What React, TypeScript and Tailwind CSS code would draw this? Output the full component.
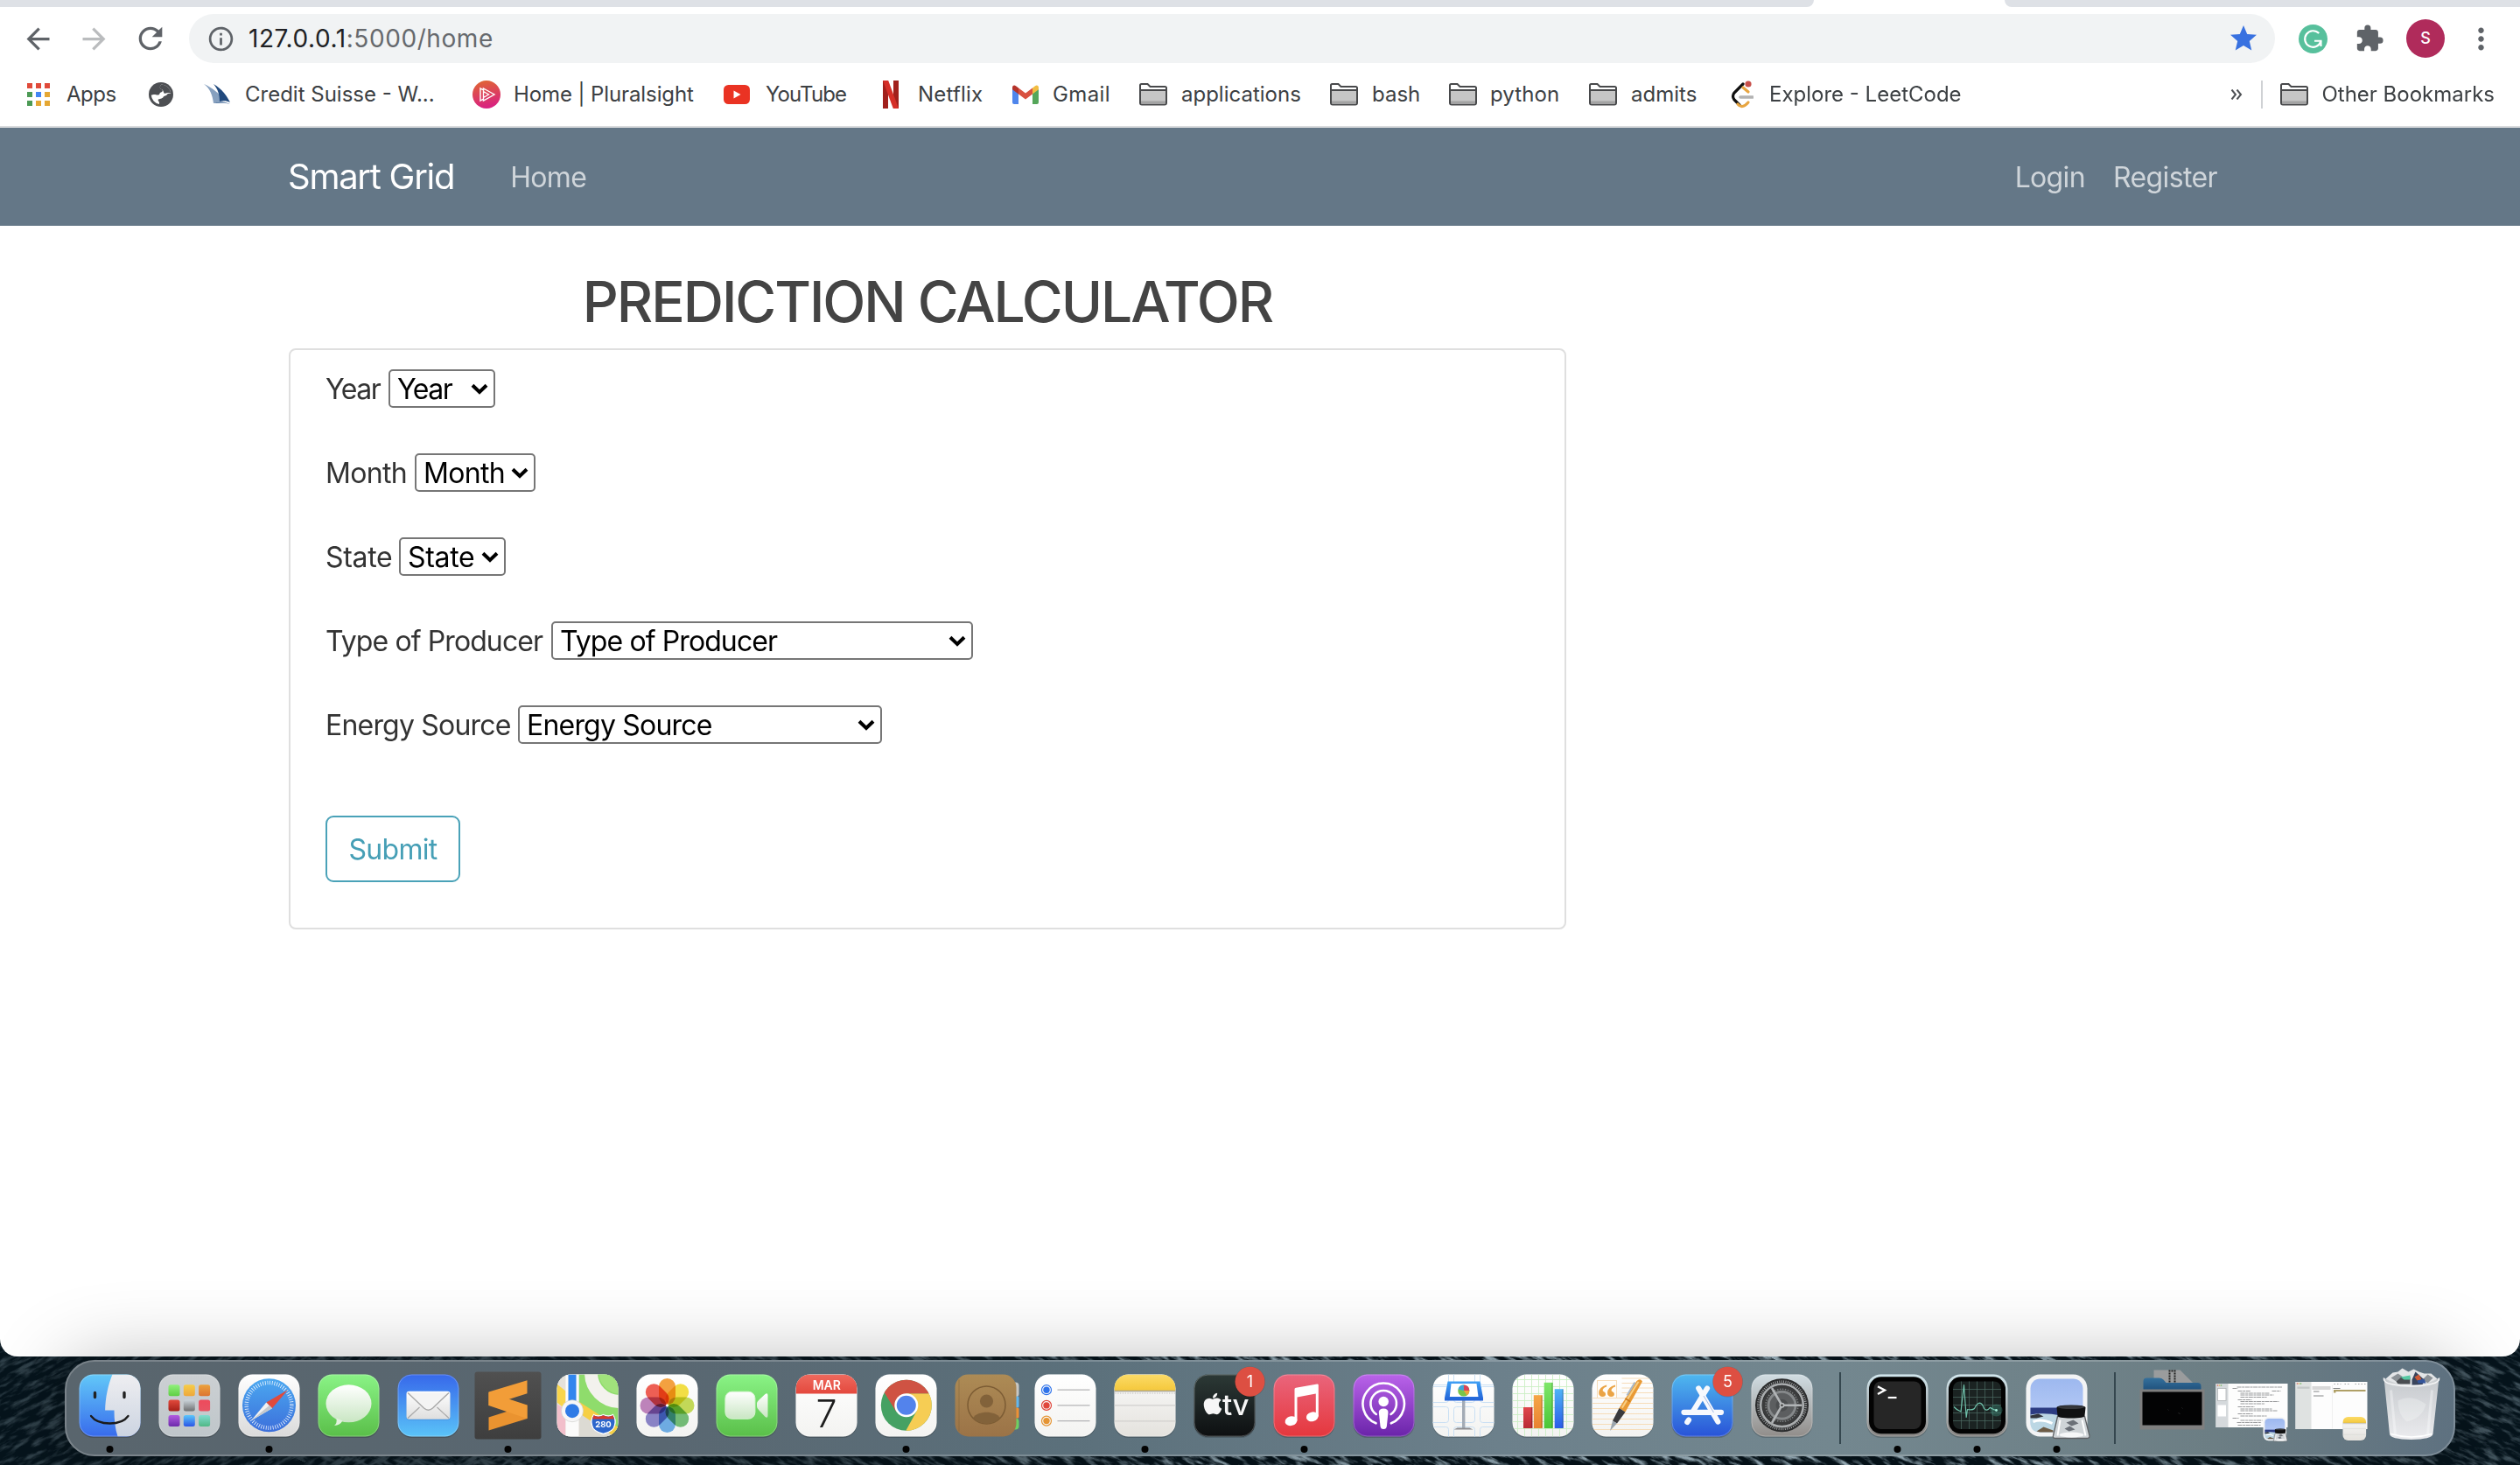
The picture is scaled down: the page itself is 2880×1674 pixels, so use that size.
import React from "react";
import {
  MdArrowBack,
  MdArrowForward,
  MdRefresh,
  MdInfoOutline,
  MdStar,
  MdExtension,
  MdMoreVert,
} from "react-icons/md";
import { FaApple } from "react-icons/fa";

/* ---------- browser toolbar ---------- */

function TabStrip() {
  return (
    <div className="flex h-2 bg-white">
      <div className="w-[2073px] rounded-br-[10px] bg-[#dee1e6]" />
      <div className="w-[218px] bg-white" />
      <div className="flex-1 rounded-bl-[10px] bg-[#dee1e6]" />
    </div>
  );
}

function Toolbar() {
  return (
    <div className="flex h-[72px] items-center bg-white pl-[24px] text-[#5f6368]">
      <MdArrowBack className="size-[39px]" />
      <MdArrowForward className="ml-[25px] size-[39px] text-[#babcbe]" />
      <MdRefresh className="ml-[25px] size-[40px]" />
      <div className="ml-6 flex h-14 w-[2384px] items-center rounded-full bg-[#f1f3f4] pr-[18px] pl-[20px]">
        <MdInfoOutline className="size-[33px]" />
        <span className="ml-[15px] text-[28px] tracking-[0.58px] text-[#202124]">
          127.0.0.1<span className="text-[#66696d]">:5000/home</span>
        </span>
        <MdStar className="ml-auto size-[36px] text-[#3871e0]" />
      </div>
      <svg viewBox="0 0 32 32" className="ml-[27px] size-[33px]">
        <circle cx="16" cy="16" r="16" fill="#57c09c" />
        <path d="M22.5 9.8A9 9 0 1 0 24.6 18.6" fill="none" stroke="#fff" strokeWidth="2.1" />
        <path d="M17.5 18.2h7.2v6" fill="none" stroke="#fff" strokeWidth="2.1" />
      </svg>
      <MdExtension className="ml-[31px] size-[34px]" />
      <div className="ml-[25px] flex size-[44px] items-center justify-center rounded-full bg-[#b02b5b] text-[18px] font-medium text-white">
        S
      </div>
      <MdMoreVert className="ml-[22px] size-[39px]" />
    </div>
  );
}

function AppsIcon() {
  const colors = ["#e04a3a", "#e04a3a", "#e04a3a", "#4c9a55", "#4285f4", "#e5a733", "#4c9a55", "#e5a733", "#e5a733"];
  return (
    <div className="grid w-[26px] grid-cols-3 gap-[4px]">
      {colors.map((c, i) => (
        <div key={i} className="size-[6px]" style={{ backgroundColor: c }} />
      ))}
    </div>
  );
}

function GlobeIcon() {
  return (
    <svg viewBox="0 0 28 28" className="w-[28px]">
      <circle cx="14" cy="14" r="14" fill="#4d4f53" />
      <path d="M14.500 2.600C12 5 12.500 7 14.500 8C17 9 15.500 11 14 11.500C12 12 13 14 11 14.500C8.500 15 8 13.500 5.500 14L2.800 14.800A11.300 11.300 0 0 0 12 25C12.500 22.500 11 22 10.500 20C12 18.500 15.500 19 16.500 17C17.500 15 20 16 21 14C22 12 24 13 25.200 12.500A11.300 11.300 0 0 0 14.500 2.600Z" fill="#fff" />
      <path d="M14.500 2.600C12 5 12.500 7 14.500 8C17 9 16.500 10.500 17.500 12.500C20 13.500 22 11 25.200 12.500A11.300 11.300 0 0 0 14.500 2.600Z" fill="#4d4f53" />
    </svg>
  );
}

function CreditSuisseIcon() {
  return (
    <svg viewBox="0 0 30 24" className="w-[30px]">
      <path d="M0 0C7 5 10 13 11 22L22 19C18 10 9 4 0 0Z" fill="#86a0bf" />
      <path d="M11 0C20 5 25 12 30 21C26 19 22 19 18 20C18 12 16 6 11 0Z" fill="#20497d" />
      <path d="M11 22C18 19 24 20 30 23C24 21 18 22 11 22Z" fill="#5f80a8" />
    </svg>
  );
}

function PluralsightIcon() {
  return (
    <svg viewBox="0 0 32 32" className="w-8">
      <defs>
        <linearGradient id="ps" x1="0" y1="0" x2="0.2" y2="1">
          <stop offset="0" stopColor="#e0692f" />
          <stop offset="1" stopColor="#d9237f" />
        </linearGradient>
      </defs>
      <circle cx="16" cy="16" r="16" fill="url(#ps)" />
      <path d="M9 9V23L12.500 21V11Z M12.500 9L25 16L12.500 23Z M12.500 12.500L18.500 16L12.500 19.500" fill="none" stroke="#fff" strokeWidth="1.400" />
    </svg>
  );
}

function YouTubeIcon() {
  return (
    <svg viewBox="0 0 30 22" className="w-[30px]">
      <rect width="30" height="22" rx="5.5" fill="#ea3323" />
      <path d="M11.5 6.5L19.5 11L11.5 15.5Z" fill="#fff" />
    </svg>
  );
}

function NetflixIcon() {
  return (
    <svg viewBox="0 0 18 32" className="w-[18px]">
      <path d="M0 0H6V32H0ZM12 0H18V32H12Z" fill="#a1201c" />
      <path d="M0 0H6.2L18 32H11.8Z" fill="#d52e27" />
    </svg>
  );
}

function GmailIcon() {
  return (
    <svg viewBox="0 0 30 22" className="w-[30px]">
      <path d="M0 3V20a2 2 0 0 0 2 2H7V8Z" fill="#4f86ec" />
      <path d="M30 3V20a2 2 0 0 1-2 2H23V8Z" fill="#55a65a" />
      <path d="M23 3.5L26 1.2C28 -.3 30 .8 30 3V5.2L23 10.5Z" fill="#f2bd42" />
      <path d="M7 3.5L4 1.2C2 -.3 0 .8 0 3V5.2L7 10.5Z" fill="#b5332a" />
      <path d="M7 3.5L15 9.5L23 3.5V10.5L15 16.5L7 10.5Z" fill="#d85140" />
    </svg>
  );
}

function FolderIcon() {
  return (
    <svg viewBox="0 0 32 26" className="w-8 shrink-0">
      <path d="M1 22.5V2.5A1.5 1.5 0 0 1 2.500 1H9.500L12.500 4H29.500A1.500 1.500 0 0 1 31 5.500V22.500A2 2 0 0 1 29 24.500H3A2 2 0 0 1 1 22.500Z" fill="#fff" stroke="#48494b" strokeWidth="2" />
      <rect x="2" y="9" width="28" height="14" fill="#c6c6c6" />
      <rect x="2" y="20.500" width="28" height="3" fill="#a3a3a3" />
      <path d="M1 8H31" stroke="#48494b" strokeWidth="2" />
    </svg>
  );
}

function LeetCodeIcon() {
  return (
    <svg viewBox="0 0 26 32" className="w-[26px]">
      <path d="M14 4L4 14Q1 18 4 22L10 28" fill="none" stroke="#111" strokeWidth="3.200" strokeLinecap="round" />
      <path d="M14 8L20 13M8 27Q13 33 20 25" fill="none" stroke="#e7a541" strokeWidth="3.200" strokeLinecap="round" />
      <path d="M11 19H25" stroke="#b3b3b3" strokeWidth="3.600" strokeLinecap="round" />
      <circle cx="20" cy="4" r="3.600" fill="#c8504b" />
    </svg>
  );
}

function Bookmark({ icon, label, slot, gap }: { icon: React.ReactNode; label?: string; slot: string; gap?: string }) {
  return (
    <div className={"flex shrink-0 items-center " + slot}>
      {icon}
      {label && <span className={"whitespace-nowrap " + (gap ?? "")}>{label}</span>}
    </div>
  );
}

function BookmarksBar() {
  return (
    <div className="flex h-[66px] border-b-2 border-[#d9dbdd] bg-white pb-2 pl-[31px] text-[24px] text-[#3c4043]">
      <Bookmark icon={<AppsIcon />} label="Apps" slot="w-[139px]" gap="ml-[19px] tracking-[-0.5px]" />
      <Bookmark icon={<GlobeIcon />} slot="w-[63px]" />
      <Bookmark icon={<CreditSuisseIcon />} label="Credit Suisse - W..." slot="w-[307px]" gap="ml-[17px]" />
      <Bookmark icon={<PluralsightIcon />} label="Home | Pluralsight" slot="w-[287px]" gap="ml-[15px] tracking-[-0.1px]" />
      <Bookmark icon={<YouTubeIcon />} label="YouTube" slot="w-[182px]" gap="ml-[18px] tracking-[-0.9px]" />
      <Bookmark icon={<NetflixIcon />} label="Netflix" slot="w-[148px]" gap="ml-[22px] tracking-[0.19px]" />
      <Bookmark icon={<GmailIcon />} label="Gmail" slot="w-[145px]" gap="ml-[16px] tracking-[0.4px]" />
      <Bookmark icon={<FolderIcon />} label="applications" slot="w-[218px]" gap="ml-[16px]" />
      <Bookmark icon={<FolderIcon />} label="bash" slot="w-[136px]" gap="ml-[16px]" />
      <Bookmark icon={<FolderIcon />} label="python" slot="w-[160px]" gap="ml-[15px] tracking-[0.1px]" />
      <Bookmark icon={<FolderIcon />} label="admits" slot="w-[162px]" gap="ml-[16px]" />
      <Bookmark icon={<LeetCodeIcon />} label="Explore - LeetCode" slot="w-[280px]" gap="ml-[18px]" />
      <div className="ml-auto flex items-center pr-[29px]">
        <svg viewBox="0 0 14 12" className="w-[14px]">
          <path d="M1.500 .5L6 6L1.500 11.500M7.500 .5L12 6L7.500 11.500" fill="none" stroke="#4d5054" strokeWidth="2" />
        </svg>
        <div className="mr-5 ml-[21px] h-8 w-[2px] bg-[#cfd1d4]" />
        <FolderIcon />
        <span className="ml-[15px] whitespace-nowrap">Other Bookmarks</span>
      </div>
    </div>
  );
}

/* ---------- page ---------- */

function Navbar() {
  return (
    <nav className="flex h-[112px] items-center bg-[#647787] pr-[346px] pl-[329px] text-[32px] text-[#cfd5da]">
      <a className="text-[40px] tracking-[-1.27px] text-white">Smart Grid</a>
      <a className="mt-[2px] ml-[64px] tracking-[-0.67px]">Home</a>
      <a className="mt-[2px] ml-auto tracking-[-0.66px]">Login</a>
      <a className="mt-[2px] ml-[32px] tracking-[-0.6px]">Register</a>
    </nav>
  );
}

function Field({ label, labelWidth, selectWidth }: { label: string; labelWidth: string; selectWidth: string }) {
  return (
    <div className="flex h-[44px] items-center">
      <label className={"pt-[2px] whitespace-nowrap text-[#333] " + labelWidth}>{label}</label>
      <div className={"relative h-[44px] " + selectWidth}>
        <select className="block h-full w-full appearance-none rounded-[5px] border-2 border-[#767676] bg-white pt-px pl-[8px] text-[32px] leading-[39px] text-black">
          <option>{label}</option>
        </select>
        <svg viewBox="0 0 20 13" className="absolute top-[16px] right-[8px] w-[20px]">
          <path d="M2 2.200L10 10L18 2.200" fill="none" stroke="#000" strokeWidth="4" />
        </svg>
      </div>
    </div>
  );
}

function Calculator() {
  return (
    <main className="ml-[330px] w-[1460px] pt-[48px]">
      <h1 className="h-[77px] text-center text-[64px] leading-[77px] font-medium tracking-[-2.05px] whitespace-nowrap text-[#444]">
        PREDICTION CALCULATOR
      </h1>
      <form className="mt-[15px] h-[664px] rounded-[8px] border-2 border-[#dfdfdf] pt-[22px] pl-[40px] text-[32px]">
        <div className="flex flex-col gap-[52px]">
          <Field label="Year" labelWidth="w-[72px] tracking-[-1.5px]" selectWidth="w-[122px] tracking-[-1.5px]" />
          <Field label="Month" labelWidth="w-[102px] tracking-[-0.7px]" selectWidth="w-[138px] tracking-[-0.7px]" />
          <Field label="State" labelWidth="w-[84px] tracking-[-0.32px]" selectWidth="w-[122px] tracking-[-0.32px]" />
          <Field label="Type of Producer" labelWidth="w-[258px] tracking-[-0.9px]" selectWidth="w-[482px] tracking-[-0.9px]" />
          <Field label="Energy Source" labelWidth="w-[220px] tracking-[-0.8px]" selectWidth="w-[416px] tracking-[-0.8px]" />
        </div>
        <button type="button" className="mt-[82px] h-[76px] w-[154px] rounded-[9px] border-2 border-[#4aa2b8] pt-[2px] tracking-[-0.7px] text-[#469fb6]">
          Submit
        </button>
      </form>
    </main>
  );
}

/* ---------- desktop and dock ---------- */

function Water() {
  return (
    <svg className="absolute inset-x-0 bottom-0 h-[160px] w-full" viewBox="0 0 2880 160" preserveAspectRatio="none">
      <defs>
        <filter id="waves" x="0" y="0" width="100%" height="100%">
          <feTurbulence type="fractalNoise" baseFrequency="0.045 0.18" numOctaves="4" seed="7" />
          <feColorMatrix values="0 0 0 0 0.42  0 0 0 0 0.56  0 0 0 0 0.64  3.4 0 0 0 -1.55" />
        </filter>
        <linearGradient id="lit" x1="0" x2="1" y1="0" y2="0">
          <stop offset="0" stopColor="#fff" stopOpacity="0.25" />
          <stop offset="0.35" stopColor="#fff" stopOpacity="0.35" />
          <stop offset="0.5" stopColor="#fff" stopOpacity="0.9" />
          <stop offset="0.75" stopColor="#fff" stopOpacity="1" />
          <stop offset="0.92" stopColor="#fff" stopOpacity="0.5" />
          <stop offset="1" stopColor="#fff" stopOpacity="0.35" />
        </linearGradient>
        <mask id="litMask">
          <rect width="2880" height="160" fill="url(#lit)" />
        </mask>
      </defs>
      <rect width="2880" height="160" fill="#06141c" />
      <g mask="url(#litMask)">
        <g transform="rotate(-28 0 160)">
          <rect x="-100" y="0" width="700" height="500" filter="url(#waves)" />
        </g>
        <g transform="translate(500 0)">
          <g transform="rotate(24 1200 80)">
            <rect x="-100" y="-600" width="2600" height="1300" filter="url(#waves)" />
          </g>
        </g>
      </g>
    </svg>
  );
}

const gradients: [string, string, string][] = [
  ["finderL", "#62c8f8", "#386bec"],
  ["finderR", "#eeeef1", "#ccd4e1"],
  ["launch", "#ccd0d3", "#bfc6ca"],
  ["white", "#ffffff", "#f3f3f1"],
  ["whiteGray", "#ffffff", "#dadada"],
  ["safari", "#4ba8f0", "#3c6fdb"],
  ["green", "#8af386", "#5abf49"],
  ["mail", "#3768ea", "#5ac3f8"],
  ["env", "#ffffff", "#dedede"],
  ["bubble", "#ffffff", "#c9e6c3"],
  ["sublime", "#505050", "#3e3e3e"],
  ["red", "#ee6a5e", "#e4483d"],
  ["contacts", "#ad8b55", "#9b7347"],
  ["yellow", "#fbdb68", "#f5c83b"],
  ["paper", "#fafafa", "#e4e2dd"],
  ["tv", "#2c3936", "#0d0f11"],
  ["music", "#ea657c", "#e5373d"],
  ["pod", "#ba63ea", "#6a24a9"],
  ["store", "#4fb8ef", "#2953d7"],
  ["sys", "#d1dde3", "#918d8a"],
  ["metal", "#cde4ec", "#83807e"],
  ["blue", "#3fa0f5", "#2161d6"],
  ["barR", "#e0474c", "#b92c34"],
  ["barO", "#f5a647", "#e98230"],
  ["barG", "#7ee66a", "#4cc637"],
  ["barB", "#4fb4f7", "#2a5ce8"],
  ["sky", "#9db8ef", "#c0d2f8"],
  ["folder", "#34709c", "#1d4d78"],
  ["trash", "#c9cdd0", "#f1f1f3"],
  ["lp0", "#91f07c", "#5fcf45"],
  ["lp1", "#f6cd49", "#eea73a"],
  ["lp2", "#eca23c", "#dc7431"],
  ["lp3", "#e24a3c", "#a51f18"],
  ["lp4", "#cbd4da", "#6e6f70"],
  ["lp5", "#ee4a5c", "#e85464"],
  ["lp6", "#b25be0", "#6c2bab"],
  ["lp7", "#5bc7fa", "#2a55e6"],
  ["lp8", "#80dcd0", "#4fb885"],
];

function Gradients() {
  return (
    <svg className="absolute size-0">
      <defs>
        {gradients.map(([id, a, b]) => (
          <linearGradient key={id} id={id} x1="0" y1="0" x2="0" y2="1">
            <stop offset="0" stopColor={a} />
            <stop offset="1" stopColor={b} />
          </linearGradient>
        ))}
        <clipPath id="tile">
          <rect width="70" height="71" rx="16" />
        </clipPath>
      </defs>
    </svg>
  );
}

/* Each icon is drawn on a 70 by 71 tile with some room round it. */
function Slot({ children, dot }: { children: React.ReactNode; dot?: boolean }) {
  return (
    <svg viewBox="0 0 91 110" className="h-[110px] w-[91px] shrink-0 overflow-visible">
      <g transform="translate(10.500 16.500)">{children}</g>
      {dot && <circle cx="45.500" cy="102" r="4" fill="#030303" />}
    </svg>
  );
}

function Tile({ fill }: { fill: string }) {
  return (
    <>
      <rect y="1.500" width="70" height="71" rx="16" fill="#000" opacity="0.18" />
      <rect width="70" height="71" rx="16" fill={"url(#" + fill + ")"} />
      <rect x="0.500" y="0.500" width="69" height="70" rx="15.500" fill="none" stroke="#fff" strokeOpacity="0.25" />
    </>
  );
}

function Badge({ n }: { n: string }) {
  return (
    <g>
      <circle cx="64" cy="8.500" r="17.500" fill="#000" opacity="0.15" />
      <circle cx="64" cy="8.200" r="17" fill="#dd4f42" />
      <text x="64" y="14.600" textAnchor="middle" fontSize="18" fill="#fff">{n}</text>
    </g>
  );
}

function Divider() {
  return (
    <div className="flex w-[41px] justify-center pt-[14px]">
      <div className="h-[82px] w-[2px] bg-[#35474f]" />
    </div>
  );
}

function Finder() {
  return (
    <g>
      <Tile fill="finderL" />
      <g clipPath="url(#tile)">
        <path d="M38 0C33 12 30 26 29.600 41H40C40 52 41 62 44 71H71V0Z" fill="url(#finderR)" />
      </g>
      <path d="M18 21v5M51.500 21v5" stroke="#222" strokeWidth="3.400" strokeLinecap="round" />
      <path d="M13.500 47.500Q20 56 35 56Q50 56 56 47.500" fill="none" stroke="#1c1c1c" strokeWidth="2.300" strokeLinecap="round" />
    </g>
  );
}

function Launchpad() {
  return (
    <g>
      <Tile fill="launch" />
      {[0, 1, 2, 3, 4, 5, 6, 7, 8].map((i) => (
        <rect key={i} x={11 + (i % 3) * 17.300} y={11.700 + Math.floor(i / 3) * 17.400} width="13" height="13" rx="2.500" fill={"url(#lp" + i + ")"} />
      ))}
    </g>
  );
}

function Safari() {
  return (
    <g>
      <Tile fill="whiteGray" />
      <circle cx="35" cy="35.300" r="30.500" fill="url(#safari)" />
      <circle cx="35" cy="35.300" r="25.800" fill="none" stroke="#fff" strokeOpacity="0.85" strokeWidth="4.600" strokeDasharray="0.850 1.850" />
      <path d="M56.400 17.700L31.800 32L38.500 38.800Z" fill="#df4a3c" />
      <path d="M14.600 52.700L31.800 32L38.500 38.800Z" fill="#f1f1f1" />
      <path d="M14.600 52.700L35.200 35.400L38.500 38.800Z" fill="#c4c8cc" />
    </g>
  );
}

function Messages() {
  return (
    <g>
      <Tile fill="green" />
      <ellipse cx="35" cy="33.300" rx="26" ry="21.500" fill="url(#bubble)" />
      <path d="M21 50Q22 56 18.500 58.500Q25 58 28 53Z" fill="#e3f2df" />
    </g>
  );
}

function Mail() {
  return (
    <g>
      <Tile fill="mail" />
      <rect x="10" y="20" width="50" height="32" rx="3" fill="#1c4fa0" opacity="0.3" />
      <rect x="10" y="19.200" width="50" height="32" rx="3" fill="url(#env)" />
      <path d="M11.500 50L25 37.500M58.500 50L45 37.500" stroke="#a9a9a9" strokeWidth="1.200" />
      <path d="M11.500 21L30 38.500Q35 43 40 38.500L58.500 21" fill="#f4f4f4" stroke="#a9a9a9" strokeWidth="1.400" />
    </g>
  );
}

function Sublime() {
  return (
    <g>
      <rect x="-3" y="-3" width="76" height="77" rx="3" fill="url(#sublime)" />
      <path d="M13 49L57 35V50.500L13 64Z" fill="#ea9330" />
      <path d="M13 20.500L57 35V50.500L13 35.500Z" fill="#f29d38" />
      <path d="M13 20L57 6.700V21.700L13 35.700Z" fill="#f29d38" />
    </g>
  );
}

function Maps() {
  return (
    <g>
      <Tile fill="white" />
      <g clipPath="url(#tile)">
        <rect width="70" height="71" fill="#e4e1da" />
        <path d="M25 0H70V71L25 35Z" fill="#8fdc6c" />
        <circle cx="72" cy="-2" r="33" fill="none" stroke="#f3f2ed" strokeWidth="15" />
        <circle cx="72" cy="-2" r="24" fill="#a1e37c" />
        <path d="M0 34L10 40V71H0Z" fill="#f2bfcb" />
        <path d="M0 11L10 19V40L0 32Z" fill="#f8d54b" />
        <path d="M22 29L73 62V78L22 43Z" fill="#f6cf45" />
        <path d="M25 44L70 74H25Z" fill="#dcdad3" />
        <rect x="10" width="15" height="71" fill="#fbfbfa" />
        <rect x="13" width="9" height="40" fill="#3186ee" />
      </g>
      <circle cx="17.500" cy="41.700" r="12.500" fill="#f7f7f7" stroke="#c9c9c6" strokeWidth="0.600" />
      <circle cx="17.500" cy="41.700" r="8" fill="#2f7be6" />
      <path d="M42 46Q47 49 53 46Q59 49 64 46Q68 52 66 58Q65 65 53 68Q41 65 40 58Q38 52 42 46Z" fill="#2c66cc" stroke="#fff" strokeWidth="1.300" />
      <path d="M42 46.800Q47 49.500 53 46.800Q59 49.500 64 46.800L65.500 51H40.500Z" fill="#d6392e" />
      <text x="53" y="60.500" textAnchor="middle" fontSize="9.500" fontWeight="700" fill="#fff">280</text>
    </g>
  );
}

function Photos() {
  const petals = ["#f2992f", "#f1dc35", "#bdd54a", "#67b56a", "#62a4e0", "#7f78c0", "#b878b4", "#ec5145"];
  return (
    <g>
      <Tile fill="white" />
      <g className="isolate">
        {petals.map((c, i) => (
          <rect key={c} x="-9.500" y="-31" width="19" height="30" rx="9.500" fill={c} opacity="0.92" className="mix-blend-multiply" transform={"translate(35 35.500) rotate(" + i * 45 + ")"} />
        ))}
      </g>
      <circle cx="35" cy="35.500" r="1.400" fill="#fff" />
    </g>
  );
}

function FaceTime() {
  return (
    <g>
      <Tile fill="green" />
      <rect x="10.400" y="19.700" width="34" height="31" rx="7.500" fill="url(#bubble)" stroke="#d8f5d2" />
      <path d="M46.500 33Q47 31 49 29L56 22.500Q59 20.500 59 24V47Q59 50.500 56 48.500L49 41Q46.500 39 46.500 36.500Z" fill="url(#bubble)" />
    </g>
  );
}

function Calendar() {
  return (
    <g>
      <Tile fill="white" />
      <g clipPath="url(#tile)">
        <rect width="70" height="22" fill="url(#red)" />
      </g>
      <text x="35.300" y="17" textAnchor="middle" fontSize="14" fontWeight="600" fill="#fff">MAR</text>
      <text x="35" y="60" textAnchor="middle" fontSize="43" fontWeight="300" fill="#1d1d1d">7</text>
    </g>
  );
}

function Chrome() {
  return (
    <g>
      <Tile fill="white" />
      <circle cx="35.300" cy="35.300" r="29" fill="#45a163" />
      <path d="M35.300 21.800H61A29 29 0 0 1 34.800 64.300L47 42Z" fill="#f6cd54" />
      <path d="M10.200 20.700A29 29 0 0 1 61 21.800H35.300L23.600 42.500Z" fill="#cf5343" />
      <circle cx="35.300" cy="35.300" r="13.500" fill="#fff" />
      <circle cx="35.300" cy="35.300" r="11" fill="#5383ec" />
    </g>
  );
}

function Contacts() {
  return (
    <g>
      <rect x="62" y="9" width="11" height="17" rx="4" fill="#c8c7c3" />
      <rect x="62" y="25" width="11" height="13" rx="1.500" fill="#62b7ee" />
      <rect x="62" y="38" width="11" height="12" rx="1.500" fill="#ee9135" />
      <rect x="62" y="50" width="11" height="13" rx="4" fill="#6ed163" />
      <rect width="70" height="71" rx="15" fill="url(#contacts)" />
      <path d="M4.500 6V65" stroke="#7d5f38" strokeOpacity="0.5" strokeWidth="1" />
      <circle cx="36" cy="35" r="21.500" fill="none" stroke="#7c5c34" strokeWidth="1.500" />
      <circle cx="36" cy="30.500" r="7.600" fill="#82623a" />
      <path d="M20.500 49.500C26 41 46 41 51.500 49.500A21 21 0 0 1 20.500 49.500Z" fill="#82623a" />
    </g>
  );
}

function Reminders() {
  return (
    <g>
      <Tile fill="white" />
      {["#2f73ea", "#e0473c", "#e59433"].map((c, i) => (
        <g key={c} transform={"translate(0 " + i * 17.700 + ")"}>
          <circle cx="13.500" cy="17.700" r="5.500" fill="none" stroke={c} strokeWidth="1.200" />
          <circle cx="13.500" cy="17.700" r="3.700" fill={c} />
          <path d="M26 17.700H63" stroke="#b4b4b6" strokeWidth="1.200" />
        </g>
      ))}
    </g>
  );
}

function Notes() {
  return (
    <g>
      <Tile fill="paper" />
      <g clipPath="url(#tile)">
        <rect width="70" height="18.500" fill="url(#yellow)" />
        <path d="M0 19H70" stroke="#a9a392" strokeWidth="1.600" />
        <path d="M1 21.500H70" stroke="#b9b8b4" strokeWidth="1.200" strokeDasharray="1.200 1.600" />
        <path d="M0 35.300H70M0 53.300H70" stroke="#d1d0cd" strokeWidth="1.200" />
      </g>
    </g>
  );
}

function AppleTv() {
  return (
    <g>
      <Tile fill="tv" />
      <svg x="7.500" y="19.500" width="26" height="29" viewBox="0 0 26 29" className="overflow-visible">
        <FaApple size={28} color="#f6f6f6" className="size-[28px]" />
      </svg>
      <text x="32.500" y="46.500" fontSize="33" fontWeight="500" fill="#f6f6f6" letterSpacing="-0.500">tv</text>
      <Badge n="1" />
    </g>
  );
}

function Music() {
  return (
    <g>
      <Tile fill="music" />
      <g fill="#fff">
        <path d="M24 17Q24 15.500 25.600 15.200L49.800 11Q51.300 10.800 51.300 12.300V48H48.300V22L27 26V53H24Z" />
        <ellipse cx="20" cy="53.200" rx="7" ry="5.300" transform="rotate(-14 20 53.200)" />
        <ellipse cx="44.300" cy="48.300" rx="7" ry="5.300" transform="rotate(-14 44.300 48.300)" />
      </g>
    </g>
  );
}

function Podcasts() {
  return (
    <g>
      <Tile fill="pod" />
      <g fill="none" stroke="#fff" strokeWidth="2.600" strokeLinecap="round">
        <path d="M26 55.800A23.700 23.700 0 1 1 43.400 55.800" />
        <path d="M26.300 45.500A14.800 14.800 0 1 1 43.100 45.500" />
      </g>
      <circle cx="34.700" cy="31" r="5.800" fill="#fff" />
      <path d="M29.300 43.500Q29.300 39 34.700 39Q40 39 40 43.500L38.400 59Q38 62.500 34.700 62.500Q31.400 62.500 31 59Z" fill="#fff" />
    </g>
  );
}

function Keynote() {
  return (
    <g>
      <Tile fill="white" />
      <g clipPath="url(#tile)" fill="none" stroke="#c4dcf3" strokeWidth="0.900">
        {[-6, 24, 54].map((x) =>
          [-6, 14, 37, 60].map((y) => <rect key={x + "-" + y} x={x} y={y} width="24" height="18" rx="3" />),
        )}
      </g>
      <rect x="33.500" y="29" width="3.400" height="33" fill="#a3abb5" />
      <path d="M24 63L28 61H42L46 63Z" fill="#8c8c90" />
      <path d="M17 8H54L57.500 27V30H13.500V27Z" fill="url(#blue)" />
      <path d="M21 10.500H50L52 25.500H19.300Z" fill="#fff" />
      <circle cx="35.300" cy="18.500" r="6.600" fill="#79c54b" />
      <path d="M35.300 18.500V11.900A6.600 6.600 0 0 1 41.900 18.500Z" fill="#d9435b" />
      <path d="M35.300 18.500H41.900A6.600 6.600 0 0 1 39 24Z" fill="#efa53b" />
      <path d="M35.300 18.500V11.900A6.600 6.600 0 0 0 29 17Z" fill="#3ea4de" />
    </g>
  );
}

function Numbers() {
  return (
    <g>
      <Tile fill="white" />
      <g clipPath="url(#tile)" stroke="#cbeec4" strokeWidth="0.900">
        {[6, 14, 22, 30, 38, 46, 54, 62].map((v) => (
          <path key={v} d={"M" + v + " 0V71M0 " + v + "H70"} />
        ))}
      </g>
      <rect x="12.500" y="37.500" width="10.500" height="24" fill="url(#barR)" />
      <rect x="24.300" y="23.700" width="10" height="37.800" fill="url(#barO)" />
      <rect x="36.200" y="9.300" width="10" height="52.200" fill="url(#barG)" />
      <rect x="48.200" y="16.700" width="10" height="44.800" fill="url(#barB)" />
      <path d="M22 37.500V61M33.500 24V61M45.500 9.500V61M57.500 17V61" stroke="#000" strokeOpacity="0.22" strokeWidth="1.200" />
    </g>
  );
}

function Pages() {
  return (
    <g>
      <Tile fill="white" />
      <g clipPath="url(#tile)" stroke="#f6dcb8" strokeWidth="1">
        {[4.500, 10, 15.500, 21].map((y) => (
          <path key={y} d={"M34 " + y + "H70"} />
        ))}
        {[27, 33, 39, 45, 51, 57, 63].map((y) => (
          <path key={y} d={"M0 " + y + "H70"} />
        ))}
        <rect x="6" y="7" width="22" height="20" fill="#fffdf9" />
      </g>
      <text x="5.500" y="41.500" fontSize="45" fontWeight="700" fontFamily="'Liberation Serif', serif" fill="#eba445">“</text>
      <path d="M51 7.500Q55 4 57.500 8L38 43L31 38.500Z" fill="#e99a35" />
      <path d="M52 8L33.500 37.500L35 39L54 8.500Z" fill="#f8cf85" />
      <path d="M49 9L40 24" stroke="#a6b7c8" strokeWidth="2" />
      <path d="M31 38.500L38 43L28.500 56L23.500 53Z" fill="#3a3a3c" />
      <path d="M23.500 53L28.500 56L20.500 64.500Z" fill="#9ba5ad" />
      <path d="M38 27.500L43.500 31" stroke="#c97a20" strokeWidth="1.600" />
    </g>
  );
}

function AppStore() {
  return (
    <g>
      <Tile fill="store" />
      <g stroke="#f7f9fd" strokeWidth="6.200" strokeLinecap="round">
        <path d="M40.500 16L24.500 42" />
        <path d="M14 43.300H56.500" />
        <path d="M30.800 16L52.800 54" />
        <path d="M19.500 52L17.800 54.500" />
      </g>
      <path d="M36.500 24.500L48 43.500" stroke="#8fa9dd" strokeWidth="0.800" />
      <Badge n="5" />
    </g>
  );
}

function SystemPreferences() {
  return (
    <g>
      <Tile fill="sys" />
      <circle cx="35" cy="35.300" r="30.500" fill="#2b2c2d" />
      <circle cx="35" cy="35.300" r="27.200" fill="none" stroke="#a4a7a9" strokeWidth="2.600" strokeDasharray="0.900 1.500" />
      <circle cx="35" cy="35.300" r="24.300" fill="none" stroke="#a9acae" strokeWidth="2.600" />
      <circle cx="35" cy="35.300" r="22.500" fill="#3a3b3c" />
      <circle cx="35" cy="35.300" r="18.500" fill="none" stroke="#7d8082" strokeWidth="1.500" strokeDasharray="1.500 1.500" />
      <circle cx="35" cy="35.300" r="15.500" fill="#5c5e60" stroke="#85888a" strokeWidth="3" />
      <circle cx="35" cy="35.300" r="7" fill="#4c4e50" />
      <path d="M35 35.300H58M35 35.300L23.500 15.500M35 35.300L23.500 55.500" stroke="#b1b4b6" strokeWidth="2.600" />
      <circle cx="35" cy="35.300" r="3" fill="#b5b8ba" />
      <circle cx="35" cy="35.300" r="1.200" fill="#333" />
    </g>
  );
}

function DarkScreen() {
  return (
    <>
      <Tile fill="metal" />
      <rect x="2.500" y="2.800" width="65" height="65" rx="14" fill="#030303" />
    </>
  );
}

function Terminal() {
  return (
    <g>
      <DarkScreen />
      <rect x="8" y="8" width="54" height="54.500" rx="8" fill="#262626" />
      <path d="M12.500 13.800L20.500 18L12.500 22.500" fill="none" stroke="#fff" strokeWidth="2.400" />
      <path d="M24.200 26.500H34" stroke="#fff" strokeWidth="2.200" />
    </g>
  );
}

function ActivityMonitor() {
  return (
    <g>
      <DarkScreen />
      <rect x="7.500" y="8" width="55" height="54.500" rx="8" fill="#1b2322" />
      <g stroke="#4c6b63" strokeWidth="0.700">
        {[17, 26, 35, 44, 53].map((v) => (
          <path key={v} d={"M" + v + " 8V62.500M7.500 " + v + "H62.500"} />
        ))}
      </g>
      <circle cx="57" cy="41" r="7" fill="#3f8f7c" opacity="0.4" />
      <path d="M8.500 37Q12 41 16.500 42.500L20 12L22.700 49L24 40Q30 41 32 39Q35 32.700 38 32.700Q41 33 43 39Q46 43 50 37.700Q52 40 57 41" fill="none" stroke="#6fc2ab" strokeWidth="1.200" strokeLinejoin="round" />
      <circle cx="57" cy="41" r="1.400" fill="#a7f0dc" />
    </g>
  );
}

function PreviewArt() {
  return (
    <g>
      <rect width="70" height="71" rx="16" fill="#f3f4f5" />
      <rect x="5" y="5" width="60" height="61" rx="11" fill="url(#sky)" />
      <rect x="5" y="38" width="60" height="10" fill="#2c3c82" />
      <path d="M5 46Q20 43 40 47L65 45V55Q65 66 54 66H16Q5 66 5 55Z" fill="#bcd7e4" />
      <path d="M5 47L14 45L20 48L12 50H5Z" fill="#33363c" />
      <path d="M12 65L20 60L31 64V66H16Z" fill="#6d5c46" />
      <path d="M8 54Q18 50 30 56" stroke="#fff" strokeWidth="3" fill="none" />
      <path d="M36 48H67L72.500 70Q73 73 69 73H34Q30 73 31 70Z" fill="#cfd4d7" stroke="#5f6164" strokeWidth="1.300" />
      <path d="M39 52L36 70M64 52L68 70" stroke="#fff" strokeWidth="2" />
      <path d="M46 55L54 52L60 56L52 59ZM44 62L50 59L56 63L49 65Z" fill="#6b7077" />
      <ellipse cx="52" cy="69" rx="14" ry="3" fill="#f6f7f8" />
      <path d="M35 38Q35 35 51.500 35Q68 35 68 38L67 47Q67 50 51.500 50Q36 50 36 47Z" fill="#101112" />
      <ellipse cx="51.500" cy="37.500" rx="15" ry="2" fill="#35373a" />
    </g>
  );
}

function MinimizedStack() {
  return (
    <g>
      <path d="M14 -5H44L61 12H14Z" fill="#9a9c9d" />
      <path d="M32 -5V10M38 -5V10M31 -4H39" stroke="#222" strokeWidth="2" strokeDasharray="2 1" />
      <path d="M2 20V8Q2 4 6 4H20Q23 4 25 6L28 9.500H64Q68 9.500 68 13.500V20Z" fill="url(#folder)" />
      <rect x="-2" y="17" width="74" height="46" fill="#7f7f7f" />
      <rect x="1" y="20" width="68" height="38" fill="#030304" />
      <path d="M42 44l2 1M30 40l1 1M46 38l1 1" stroke="#2b2b2b" strokeWidth="1" />
    </g>
  );
}

function MinimizedDocument() {
  return (
    <g>
      <rect x="-6" y="10.500" width="82" height="50" fill="#fdfdfd" />
      <rect x="-6" y="10.500" width="14" height="50" fill="#d5d9dc" />
      <rect x="-4" y="16" width="9.500" height="14" fill="#fff" stroke="#aeb2b5" strokeWidth="0.800" />
      <rect x="-4" y="35" width="9.500" height="13" fill="#fff" />
      <circle cx="-4" cy="12.500" r="0.800" fill="#e2655a" />
      <circle cx="-2" cy="12.500" r="0.800" fill="#e8b64a" />
      <circle cx="0" cy="12.500" r="0.800" fill="#65b957" />
      <g stroke="#8d8f91" strokeWidth="0.900">
        <path d="M13 16H19M18 14.500H70M19 19H34M58 19H68M22 21.500H55M22 23.500H60M22 26H52M19 29H35M22 31H66M22 33.500H50M19 37H38M22 39.500H58M22 41.500H64M19 45H36M22 47.500H52M13 50H20M22 52.500H47M18 55H46M19 58H45" strokeDasharray="5 0.700 3 0.600" />
      </g>
      <g transform="translate(48 48.700) scale(0.380)">
        <PreviewArt />
      </g>
    </g>
  );
}

function MinimizedNotes() {
  return (
    <g>
      <rect x="-6" y="8.500" width="82" height="54" fill="#fdfdfd" />
      <rect x="-6" y="8.500" width="18" height="54" fill="#dfe2e1" />
      <path d="M36 12V62" stroke="#ececec" strokeWidth="0.800" />
      <circle cx="-4" cy="10.500" r="0.800" fill="#e2655a" />
      <circle cx="-2" cy="10.500" r="0.800" fill="#e8b64a" />
      <circle cx="0" cy="10.500" r="0.800" fill="#65b957" />
      <rect x="-4" y="14" width="14" height="2.300" fill="#c4c8c8" />
      <rect x="13" y="13.500" width="21" height="4" fill="#d8d8d8" />
      <path d="M37 16H45M14.500 19.500H21M14.500 24.500H26" stroke="#77797b" strokeWidth="0.900" />
      <path d="M37.500 18.500H74M37.500 20H40" stroke="#b0a067" strokeWidth="1.900" />
      <path d="M38 11H46M50 11H56M62 11H74" stroke="#9a9c9d" strokeWidth="0.900" strokeDasharray="1.500 2" />
      <g transform="translate(48 48.500) scale(0.380)">
        <Notes />
      </g>
    </g>
  );
}

function Trash() {
  return (
    <g>
      <path d="M6 5L14 -2L20 -3L25 -7L32 -3L38 -6L44 -3L50 -1L58 -1L65 5L56 14H14Z" fill="#e3e5e7" />
      <path d="M12 4L20 -1L26 3L18 8ZM48 6L54 0L60 4L54 10Z" fill="#8b9196" />
      <path d="M18 8L24 3L34 3L34 11H20Z" fill="#4a4e52" />
      <path d="M23 3L34 1L34 6L27 6Z" fill="#59c9a4" />
      <path d="M36 6L40 -3L50 6L48 12H36Z" fill="#39445c" />
      <path d="M39 3L44 0L47 6L42 7Z" fill="#cf5a35" />
      <path d="M42 7L50 5L52 10H43Z" fill="#33559b" />
      <path d="M4 4Q35 22 67 4L60 68Q59 74 35 74.500Q11 74 10.500 68Z" fill="url(#trash)" fillOpacity="0.960" />
      <path d="M4 4Q3 9 12 11Q35 16 58 11Q68 9 67 4" fill="none" stroke="#f3f4f5" strokeWidth="1.600" />
      <path d="M20 30Q35 22 52 34Q48 50 30 54Q20 46 20 30Z" fill="#fff" fillOpacity="0.250" />
      <path d="M12 18L17 69M59 18L54 69" stroke="#fff" strokeOpacity="0.350" strokeWidth="3" />
      <path d="M12 68Q35 75 59 68" fill="none" stroke="#fff" strokeWidth="1.600" />
    </g>
  );
}

function Dock() {
  return (
    <div className="relative mx-[74px] mt-1 h-[110px] rounded-[34px] bg-[linear-gradient(90deg,#59656d_0%,#596771_25%,#5b707b_42%,#6c808b_60%,#73878f_74%,#6c7e84_90%,#5e7180_100%)] shadow-[0_4px_90px_rgba(0,0,0,0.29)]">
      <div className="flex h-full pl-[6px]">
        <Slot dot><Finder /></Slot>
        <Slot><Launchpad /></Slot>
        <Slot dot><Safari /></Slot>
        <Slot><Messages /></Slot>
        <Slot><Mail /></Slot>
        <Slot dot><Sublime /></Slot>
        <Slot><Maps /></Slot>
        <Slot><Photos /></Slot>
        <Slot><FaceTime /></Slot>
        <Slot><Calendar /></Slot>
        <Slot dot><Chrome /></Slot>
        <Slot><Contacts /></Slot>
        <Slot><Reminders /></Slot>
        <Slot dot><Notes /></Slot>
        <Slot><AppleTv /></Slot>
        <Slot dot><Music /></Slot>
        <Slot><Podcasts /></Slot>
        <Slot><Keynote /></Slot>
        <Slot><Numbers /></Slot>
        <Slot><Pages /></Slot>
        <Slot><AppStore /></Slot>
        <Slot><SystemPreferences /></Slot>
        <Divider />
        <Slot dot><Terminal /></Slot>
        <Slot dot><ActivityMonitor /></Slot>
        <Slot dot><PreviewArt /></Slot>
        <Divider />
        <Slot><MinimizedStack /></Slot>
        <Slot><MinimizedDocument /></Slot>
        <Slot><MinimizedNotes /></Slot>
        <Slot><Trash /></Slot>
      </div>
      <div className="pointer-events-none absolute inset-0 rounded-[34px] border-2 border-white/20" />
    </div>
  );
}

export default function App() {
  return (
    <div className="relative h-[1674px] w-[2880px] overflow-hidden bg-[#06141c] font-['Inter','Liberation_Sans',sans-serif] leading-none">
      <Gradients />
      <Water />
      <div className="relative h-[1550px] overflow-hidden rounded-b-[20px] bg-white">
        <TabStrip />
        <Toolbar />
        <BookmarksBar />
        <Navbar />
        <Calculator />
      </div>
      <Dock />
    </div>
  );
}
